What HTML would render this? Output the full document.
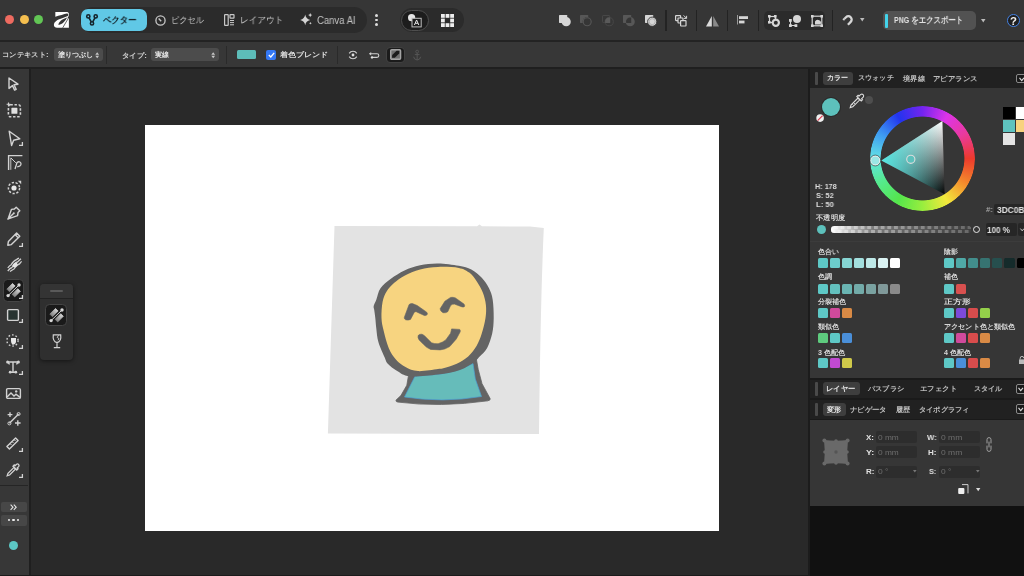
<!DOCTYPE html>
<html><head><meta charset="utf-8">
<style>
*{box-sizing:border-box}
html,body{margin:0;padding:0}
body{width:1024px;height:576px;overflow:hidden;position:relative;background:#292929;font-family:"Liberation Sans",sans-serif;color:#ddd}
.a{position:absolute}
.t{position:absolute;white-space:nowrap;line-height:1;transform-origin:0 0;-webkit-font-smoothing:antialiased;will-change:transform}
svg{position:absolute;overflow:visible}
</style></head><body>
<div class="a" style="left:0px;top:0px;width:1024px;height:40px;background:#363636;border-radius:0px;"></div>
<div class="a" style="left:0px;top:40px;width:1024px;height:1.6px;background:#232323;border-radius:0px;"></div>
<div class="a" style="left:0px;top:41.6px;width:1024px;height:0.8px;background:#3b3b3b;border-radius:0px;"></div>
<div class="a" style="left:0px;top:42px;width:1024px;height:25px;background:#373737;border-radius:0px;"></div>
<div class="a" style="left:0px;top:67px;width:1024px;height:2px;background:#1f1f1f;border-radius:0px;"></div>
<div class="a" style="left:0px;top:69px;width:29.2px;height:507px;background:#373737;border-radius:0px;"></div>
<div class="a" style="left:29.2px;top:69px;width:1.8px;height:507px;background:#1f1f1f;border-radius:0px;"></div>
<div class="a" style="left:0px;top:574.6px;width:1024px;height:1.4px;background:#1b1b1b;border-radius:0px;"></div>
<div class="a" style="left:144.5px;top:125px;width:574px;height:406px;background:#ffffff;border-radius:0px;"></div>
<div class="a" style="left:5.2px;top:14.9px;width:9.2px;height:9.2px;background:#ee6b60;border-radius:5px;"></div>
<div class="a" style="left:19.6px;top:14.9px;width:9.2px;height:9.2px;background:#f5bf4f;border-radius:5px;"></div>
<div class="a" style="left:33.8px;top:14.9px;width:9.2px;height:9.2px;background:#62c655;border-radius:5px;"></div>
<svg style="left:50px;top:8px" width="24" height="24" viewBox="0 0 576 576"><path d="M128 98 L398 94 C458 94 466 150 442 205 L425 240 L453 240 L453 472 L195 474 C112 474 86 432 96 382 C104 335 140 300 185 280 L128 280 Z" fill="#ffffff"/><path d="M110 214 L110 345 Q150 298 205 278 Q300 240 428 192 L440 160 Q432 128 405 132 Q300 158 110 214Z" fill="#363636"/><path d="M205 405 C190 350 290 262 410 228 C372 305 300 392 205 405 Z" fill="#363636"/><path d="M305 476 L445 238" stroke="#363636" stroke-width="18"/><path d="M470 222 L425 236" stroke="#363636" stroke-width="22"/></svg>
<div class="a" style="left:80px;top:6.5px;width:287px;height:26px;background:#2b2b2b;border-radius:13px;"></div>
<div class="a" style="left:80.8px;top:8.8px;width:65.8px;height:22.4px;background:#60c8e6;border-radius:7px;"></div>
<svg style="left:86px;top:14px" width="12" height="12" viewBox="0 0 12 12"><g fill="none" stroke="#15242c" stroke-width="1.6"><path d="M3 3.8 L5.3 7.9 M9 3.8 L6.7 7.9"/><circle cx="2.3" cy="2.4" r="1.6"/><circle cx="9.7" cy="2.4" r="1.6"/><circle cx="6" cy="9.4" r="1.6"/></g></svg>
<svg style="left:155px;top:14.5px" width="11" height="11" viewBox="0 0 11 11"><circle cx="5.5" cy="5.5" r="4.6" fill="none" stroke="#c8c8c8" stroke-width="1.3"/><path d="M3.6 3.6 L6.2 6.2" stroke="#c8c8c8" stroke-width="1.4"/></svg>
<svg style="left:224px;top:14px" width="11" height="12" viewBox="0 0 11 12"><g fill="none" stroke="#c8c8c8" stroke-width="1.2"><rect x="0.6" y="0.6" width="3.6" height="10.8" rx="0.5"/><rect x="6" y="0.6" width="4" height="3.6" rx="0.5"/></g><path d="M6 6.5 H10 M6 8.6 H10 M6 10.8 H10" stroke="#c8c8c8" stroke-width="1"/></svg>
<svg style="left:299.5px;top:13px" width="13" height="13" viewBox="0 0 13 13"><path d="M5.2 1.6 Q5.9 6 10.2 6.9 Q5.9 7.8 5.2 12.2 Q4.5 7.8 0.2 6.9 Q4.5 6 5.2 1.6Z" fill="#d4d4d4"/><path d="M10.2 0 Q10.5 1.8 12.3 2.1 Q10.5 2.4 10.2 4.2 Q9.9 2.4 8.1 2.1 Q9.9 1.8 10.2 0Z" fill="#d4d4d4"/><path d="M10.4 9 Q10.6 10.1 11.7 10.3 Q10.6 10.5 10.4 11.6 Q10.2 10.5 9.1 10.3 Q10.2 10.1 10.4 9Z" fill="#d4d4d4"/></svg>
<div class="a" style="left:375.2px;top:14.2px;width:2.8px;height:2.8px;background:#dddddd;border-radius:2px;"></div>
<div class="a" style="left:375.2px;top:18.5px;width:2.8px;height:2.8px;background:#dddddd;border-radius:2px;"></div>
<div class="a" style="left:375.2px;top:23.1px;width:2.8px;height:2.8px;background:#dddddd;border-radius:2px;"></div>
<div class="a" style="left:399.7px;top:7.5px;width:64px;height:24.7px;background:#2b2b2b;border-radius:12.3px;"></div>
<div class="a" style="left:400.8px;top:9.7px;width:27.9px;height:21.4px;background:#1d1d1d;border-radius:10.7px;border:1px solid #4e4e4e"></div>
<svg style="left:407px;top:13px" width="16" height="15" viewBox="0 0 16 15"><circle cx="4.6" cy="4.7" r="3.6" fill="#e6e6e6"/><rect x="5" y="5.3" width="9.2" height="8.6" fill="#1d1d1d" stroke="#bdbdbd" stroke-width="1"/><path d="M7.4 12 L9.6 7 L11.8 12 M8.3 10.3 H10.9" fill="none" stroke="#e6e6e6" stroke-width="1"/></svg>
<svg style="left:440.5px;top:14px" width="13" height="13" viewBox="0 0 13 13"><g fill="#eeeeee"><rect x="0.0" y="0.0" width="3.8" height="3.8"/><rect x="4.6" y="0.0" width="3.8" height="3.8"/><rect x="9.2" y="0.0" width="3.8" height="3.8"/><rect x="0.0" y="4.6" width="3.8" height="3.8"/><rect x="9.2" y="4.6" width="3.8" height="3.8"/><rect x="0.0" y="9.2" width="3.8" height="3.8"/><rect x="4.6" y="9.2" width="3.8" height="3.8"/><rect x="9.2" y="9.2" width="3.8" height="3.8"/></g></svg>
<svg style="left:558.8px;top:14.9px" width="12.5" height="12" viewBox="0 0 12.5 12"><rect x="0" y="0" width="8.2" height="7.9" rx="0.6" fill="#d6d6d6"/><circle cx="7.2" cy="6.7" r="4.6" fill="#d6d6d6"/></svg>
<svg style="left:580.4px;top:14.9px" width="12.5" height="12" viewBox="0 0 12.5 12"><rect x="0" y="0" width="8.2" height="7.9" rx="0.6" fill="#575757"/><circle cx="7.2" cy="6.7" r="4.6" fill="#363636"/><circle cx="7.2" cy="6.7" r="4" fill="none" stroke="#575757" stroke-width="1.1"/></svg>
<svg style="left:601.8px;top:14.9px" width="12.5" height="12" viewBox="0 0 12.5 12"><rect x="0.5" y="0.5" width="7.2" height="6.9" rx="0.6" fill="none" stroke="#474747" stroke-width="1"/><circle cx="7.2" cy="6.7" r="4.1" fill="none" stroke="#474747" stroke-width="1"/><path d="M3.2 7.9 A4.1 4.1 0 0 1 7.7 2.6 L8.2 2.6 L8.2 7.9Z" fill="#5a5a5a"/></svg>
<svg style="left:623.2px;top:14.9px" width="12.5" height="12" viewBox="0 0 12.5 12"><rect x="0" y="0" width="8.2" height="7.9" rx="0.6" fill="#575757"/><circle cx="7.2" cy="6.7" r="4.6" fill="#575757"/><path d="M3.2 7.9 A4.1 4.1 0 0 1 7.7 2.6 L8.2 2.6 L8.2 7.9Z" fill="#363636"/></svg>
<svg style="left:644.9px;top:14.9px" width="12.5" height="12" viewBox="0 0 12.5 12"><rect x="0" y="0" width="8.2" height="7.9" rx="0.6" fill="#d6d6d6"/><circle cx="7.2" cy="6.7" r="4.6" fill="#d6d6d6" stroke="#363636" stroke-width="0.9"/><circle cx="7.2" cy="6.7" r="3" fill="none" stroke="#9a9a9a" stroke-width="0.6"/></svg>
<div class="a" style="left:665.4px;top:10.3px;width:1.2px;height:20.5px;background:#232323;border-radius:0px;"></div>
<div class="a" style="left:695.8px;top:10.3px;width:1.2px;height:20.5px;background:#232323;border-radius:0px;"></div>
<div class="a" style="left:726.9px;top:10.3px;width:1.2px;height:20.5px;background:#232323;border-radius:0px;"></div>
<div class="a" style="left:758.0px;top:10.3px;width:1.2px;height:20.5px;background:#232323;border-radius:0px;"></div>
<div class="a" style="left:832.0px;top:10.3px;width:1.2px;height:20.5px;background:#232323;border-radius:0px;"></div>
<svg style="left:675.2px;top:15px" width="12.5" height="12" viewBox="0 0 12.5 12"><g fill="#363636" stroke="#d6d6d6" stroke-width="1.2"><rect x="0.6" y="0.6" width="5" height="5" rx="0.5"/><rect x="3" y="3" width="5" height="5" rx="0.5"/><rect x="5.6" y="5.6" width="5.4" height="5.4" rx="0.5"/></g><path d="M8.6 0.4 L11.4 3.2 M11.6 0.8 V3.4 H9" stroke="#d6d6d6" stroke-width="1" fill="none"/></svg>
<svg style="left:705.7px;top:16.1px" width="13" height="10.6" viewBox="0 0 13 10.6"><path d="M5.8 0 L5.8 10.6 L0 10.6Z" fill="#dcdcdc"/><path d="M7.2 0 L7.2 10.6 L13 10.6Z" fill="#8a8a8a"/></svg>
<svg style="left:737.4px;top:15px" width="11" height="9.5" viewBox="0 0 11 9.5"><rect x="0" y="0" width="1" height="9.5" fill="#9a9a9a"/><rect x="2" y="1.2" width="9" height="2.8" fill="#d6d6d6"/><rect x="2" y="5.6" width="5.5" height="2.8" fill="#d6d6d6"/></svg>
<div class="a" style="left:764.3px;top:10.9px;width:61.2px;height:19.3px;background:#2b2b2b;border-radius:5px;"></div>
<svg style="left:767.5px;top:14.7px" width="12" height="12" viewBox="0 0 12 12"><rect x="1.5" y="1.5" width="6" height="6" fill="none" stroke="#d6d6d6" stroke-width="1.2"/><g fill="#d6d6d6"><rect x="0" y="0" width="2.6" height="2.6"/><rect x="6" y="0" width="2.6" height="2.6"/><rect x="0" y="6" width="2.6" height="2.6"/></g><circle cx="7.8" cy="7.8" r="4.2" fill="#d6d6d6"/><circle cx="7.8" cy="7.8" r="2" fill="#2b2b2b"/></svg>
<svg style="left:789px;top:14.7px" width="12" height="12" viewBox="0 0 12 12"><circle cx="8" cy="4" r="4" fill="#d6d6d6"/><path d="M1.5 5 V10.5 H7" fill="none" stroke="#d6d6d6" stroke-width="1.1"/><g fill="#d6d6d6"><rect x="0" y="4" width="2.8" height="2.8"/><rect x="0" y="9.2" width="2.8" height="2.8"/><rect x="5.5" y="9.2" width="2.8" height="2.8"/></g></svg>
<svg style="left:810.5px;top:14.7px" width="12" height="12" viewBox="0 0 12 12"><rect x="1.2" y="1.2" width="9.6" height="9.6" fill="none" stroke="#d6d6d6" stroke-width="1.2"/><g fill="#d6d6d6"><rect x="0" y="0" width="2.6" height="2.6"/><rect x="9.4" y="0" width="2.6" height="2.6"/><rect x="0" y="9.4" width="2.6" height="2.6"/><rect x="9.4" y="9.4" width="2.6" height="2.6"/></g><path d="M4 9.5 V6.5 A3 3 0 0 1 9.5 9.5Z" fill="#d6d6d6"/></svg>
<svg style="left:842.2px;top:15.2px" width="10.5" height="10.5" viewBox="0 0 10.5 10.5"><path d="M1.2 5 L4 2.2 A3.3 3.3 0 0 1 8.7 6.9 L5.9 9.7" fill="none" stroke="#d6d6d6" stroke-width="2.3"/><path d="M2.4 3.8 L3.2 4.6 M5.1 6.5 L5.9 7.3" stroke="#363636" stroke-width="0.7"/></svg>
<svg style="left:860px;top:18.4px" width="4.5" height="4" viewBox="0 0 4.5 4"><path d="M0 0 H4.5 L2.25 3.6Z" fill="#bbbbbb"/></svg>
<div class="a" style="left:882.5px;top:10.7px;width:93px;height:19.8px;background:#525252;border-radius:5px;"></div>
<div class="a" style="left:885.2px;top:13.9px;width:3.3px;height:13.7px;background:#43d3ea;border-radius:1px;"></div>
<svg style="left:980.5px;top:18.6px" width="4.5" height="4" viewBox="0 0 4.5 4"><path d="M0 0 H4.5 L2.25 3.6Z" fill="#bbbbbb"/></svg>
<div class="a" style="left:1006.9px;top:14.3px;width:12.8px;height:12.8px;background:#1f1f1f;border-radius:6.4px;border:1.5px solid #4483e6"></div>
<div class="a" style="left:53.7px;top:47.8px;width:48.9px;height:13.4px;background:#4c4c4c;border-radius:3px;"></div>
<svg style="left:95px;top:51.8px" width="4.4" height="6.4" viewBox="0 0 4.4 6.4"><path d="M0.3 2.7 L2.2 0.2 L4.1 2.7Z M0.3 3.7 L2.2 6.2 L4.1 3.7Z" fill="#c8c8c8"/></svg>
<div class="a" style="left:105.6px;top:46px;width:1px;height:18px;background:#2a2a2a;border-radius:0px;"></div>
<div class="a" style="left:151px;top:47.8px;width:68px;height:13.4px;background:#4c4c4c;border-radius:3px;"></div>
<svg style="left:210.5px;top:51.8px" width="4.4" height="6.4" viewBox="0 0 4.4 6.4"><path d="M0.3 2.7 L2.2 0.2 L4.1 2.7Z M0.3 3.7 L2.2 6.2 L4.1 3.7Z" fill="#c8c8c8"/></svg>
<div class="a" style="left:226.2px;top:46px;width:1px;height:18px;background:#2a2a2a;border-radius:0px;"></div>
<div class="a" style="left:237.2px;top:49.7px;width:18.8px;height:9.6px;background:#5dbdb9;border-radius:1.5px;"></div>
<div class="a" style="left:266px;top:50px;width:10.2px;height:10px;background:#3478f6;border-radius:2px;"></div>
<svg style="left:267.5px;top:52px" width="7" height="6" viewBox="0 0 7 6"><path d="M0.8 3 L2.8 5 L6.2 0.8" fill="none" stroke="#fff" stroke-width="1.3"/></svg>
<div class="a" style="left:336.8px;top:46px;width:1px;height:18px;background:#2a2a2a;border-radius:0px;"></div>
<svg style="left:347.5px;top:49.7px" width="10" height="10" viewBox="0 0 10 10"><path d="M1.2 3.4 A4.4 4.4 0 0 1 8.8 3.4 M8.8 6.6 A4.4 4.4 0 0 1 1.2 6.6" fill="none" stroke="#cfcfcf" stroke-width="1.1"/><circle cx="5" cy="5" r="1.4" fill="#e0e0e0"/></svg>
<svg style="left:369.4px;top:51.5px" width="10" height="6.6" viewBox="0 0 10 6.6"><path d="M0.6 1.8 H8 A1.8 1.8 0 0 1 8 5.4 H3.2" fill="none" stroke="#cfcfcf" stroke-width="1.1"/><path d="M0 1.8 L2.2 0 V3.6Z" fill="#cfcfcf"/><circle cx="3" cy="5.4" r="1.2" fill="#e0e0e0"/></svg>
<div class="a" style="left:387.3px;top:48px;width:16.5px;height:13.8px;background:#1b1b1b;border-radius:3.5px;box-shadow:0 0 0 0.8px #454545"></div>
<svg style="left:389.9px;top:49.3px" width="11.3" height="10.9" viewBox="0 0 11.3 10.9"><rect x="0.7" y="0.7" width="9.9" height="9.5" rx="1" fill="#707070" stroke="#a4a4a4" stroke-width="1.4"/><path d="M2 8.8 L2.2 6 L6.6 1.8 L9.4 1.8 L9.2 4.6 L4.8 8.8Z" fill="#1b1b1b"/></svg>
<svg style="left:413px;top:49.7px" width="8.3" height="10.6" viewBox="0 0 8.3 10.6"><circle cx="4.15" cy="1.6" r="1.4" fill="none" stroke="#555" stroke-width="0.9"/><path d="M4.15 3 V10 M1.8 4.6 H6.5 M0.6 6.8 Q1 9.6 4.15 10 Q7.3 9.6 7.7 6.8" fill="none" stroke="#555" stroke-width="1"/></svg>
<svg style="left:8.3px;top:77.4px" width="11" height="14" viewBox="0 0 11 14"><path d="M1 1 L10 7.2 L6 7.8 L8.2 12.4 L6.6 13.1 L4.5 8.6 L1 11.4Z" fill="none" stroke="#d2d2d2" stroke-width="1.4" stroke-linejoin="round"/></svg>
<svg style="left:6.5px;top:103px" width="15" height="15.5" viewBox="0 0 15 15.5"><rect x="1.4" y="1.8" width="12" height="12" rx="2" fill="none" stroke="#d2d2d2" stroke-width="1.6" stroke-dasharray="2.4 1.7"/><rect x="4.4" y="4.8" width="6" height="6" rx="0.6" fill="#e0e0e0"/><path d="M1.5 -0.6 V3.2 M-0.4 1.3 H3.4" stroke="#d2d2d2" stroke-width="1.1"/></svg>
<svg style="left:7.5px;top:129.5px" width="15" height="17" viewBox="0 0 15 17"><path d="M1.2 1.2 L11.8 8.8 L5.6 10.2 L3.6 15.6Z" fill="none" stroke="#d2d2d2" stroke-width="1.4" stroke-linejoin="round"/></svg>
<svg style="left:18.5px;top:141.89999999999998px" width="4" height="4" viewBox="0 0 4 4"><path d="M3.4 0 V3.4 H0" fill="none" stroke="#d2d2d2" stroke-width="1.3"/></svg>
<svg style="left:7.6px;top:154.5px" width="15" height="15.5" viewBox="0 0 15 15.5"><path d="M0.6 15 V0.6 H14.4" fill="none" stroke="#d2d2d2" stroke-width="1.4"/><path d="M3 3 L7.8 7.8" stroke="#d2d2d2" stroke-width="1"/><path d="M2.8 2.8 V14.8" stroke="#d2d2d2" stroke-width="0.9"/><path d="M7 14 L8.6 9 A2.2 2.2 0 1 1 12 10.8 L9.2 12" fill="none" stroke="#d2d2d2" stroke-width="1.3"/></svg>
<svg style="left:6.5px;top:180px" width="15" height="15" viewBox="0 0 15 15"><circle cx="7" cy="8" r="5.6" fill="none" stroke="#d2d2d2" stroke-width="1.5" stroke-dasharray="2.3 1.6"/><circle cx="7" cy="8" r="2.6" fill="#e8e8e8"/><path d="M10.8 0.8 L14.2 0.8 L14.2 4.2Z" fill="#d2d2d2"/></svg>
<svg style="left:7px;top:206px" width="14" height="14" viewBox="0 0 14 14"><path d="M9.2 1.2 L12.8 4.8 L11 6.6 L10.6 9.6 L2 12.6 L0.9 13.1 L1.4 12 L4.4 3.4 L7.4 3Z M1.4 12.6 L6.3 7.7" fill="none" stroke="#d2d2d2" stroke-width="1.4" stroke-linejoin="round"/><circle cx="6.8" cy="7.2" r="1" fill="#d2d2d2"/></svg>
<svg style="left:6.8px;top:231.5px" width="14" height="14" viewBox="0 0 14 14"><path d="M9.6 1 L12.8 4.2 L4.4 12.6 L0.8 13.2 L1.4 9.4Z M8 2.6 L11.2 5.8" fill="none" stroke="#d2d2d2" stroke-width="1.4" stroke-linejoin="round"/></svg>
<svg style="left:18.5px;top:242.7px" width="4" height="4" viewBox="0 0 4 4"><path d="M3.4 0 V3.4 H0" fill="none" stroke="#d2d2d2" stroke-width="1.3"/></svg>
<svg style="left:6.5px;top:257.5px" width="15" height="14" viewBox="0 0 15 14"><path d="M0.8 13 Q3 10 5 9.5 Q8 4.5 10.5 4 Q12.5 2 14 0.8" fill="none" stroke="#d2d2d2" stroke-width="1.3"/><path d="M0.8 10 Q2.5 7.5 4 7 Q6.5 2.5 9.5 1.6 Q11 0.6 12 0.2" fill="none" stroke="#d2d2d2" stroke-width="1.3"/><path d="M3 13.6 Q5.5 11.6 7 11 Q10 6.5 12.4 6 Q13.5 4.6 14.6 3.4" fill="none" stroke="#d2d2d2" stroke-width="1.3"/><ellipse cx="8" cy="7" rx="2.8" ry="2" transform="rotate(-40 8 7)" fill="#e6e6e6"/></svg>
<div class="a" style="left:2.6px;top:278.7px;width:21.7px;height:23.3px;background:#1a1a1a;border-radius:4.5px;border:1px solid #454545"></div>
<svg style="left:3.7px;top:280.6px" width="18" height="18" viewBox="0 0 18 18"><defs><linearGradient id="gb" x1="0" y1="1" x2="1" y2="0"><stop offset="0" stop-color="#6e6e6e"/><stop offset="1" stop-color="#e6e6e6"/></linearGradient></defs><path d="M2.85 8.1 L8.5 2.45 L11.1 5.05 L5.45 10.7Z" fill="url(#gb)" stroke="url(#gb)" stroke-width="0.8" stroke-linejoin="round"/><path d="M8.05 13.3 L13.7 7.65 L16.3 10.25 L10.7 15.9Z" fill="url(#gb)" stroke="url(#gb)" stroke-width="0.8" stroke-linejoin="round"/><path d="M4.1 14.6 L15 4" stroke="#1c1c1c" stroke-width="2.4"/><path d="M4.1 14.6 L15 4" stroke="#d8d8d8" stroke-width="1"/><circle cx="4.1" cy="14.6" r="1.7" fill="#d8d8d8"/><circle cx="15" cy="4" r="1.7" fill="#d8d8d8"/></svg>
<svg style="left:18.9px;top:295.2px" width="4" height="4" viewBox="0 0 4 4"><path d="M3.4 0 V3.4 H0" fill="none" stroke="#d2d2d2" stroke-width="1.3"/></svg>
<svg style="left:7px;top:309px" width="12" height="12" viewBox="0 0 12 12"><rect x="0.6" y="0.6" width="10.8" height="10.8" rx="1" fill="#283431" stroke="#d2d2d2" stroke-width="1.4"/></svg>
<svg style="left:18.5px;top:319.2px" width="4" height="4" viewBox="0 0 4 4"><path d="M3.4 0 V3.4 H0" fill="none" stroke="#d2d2d2" stroke-width="1.3"/></svg>
<svg style="left:6px;top:334px" width="14" height="13" viewBox="0 0 14 13"><circle cx="6.5" cy="6.5" r="5.6" fill="none" stroke="#d2d2d2" stroke-width="1.4" stroke-dasharray="1.6 2"/><path d="M5 4 H10 V7.5 Q10 10.5 6.5 10.8 Q5 9 5 7Z" fill="#e8e8e8"/></svg>
<svg style="left:18.5px;top:345.2px" width="4" height="4" viewBox="0 0 4 4"><path d="M3.4 0 V3.4 H0" fill="none" stroke="#d2d2d2" stroke-width="1.3"/></svg>
<svg style="left:6px;top:360px" width="14" height="14" viewBox="0 0 14 14"><path d="M1.6 2 H12.4 M7 2 V12.2 M4.2 12.2 H9.8 M1.6 2 L3.6 4.4 M12.4 2 L10.4 4.4" fill="none" stroke="#d2d2d2" stroke-width="1.4"/><g fill="#d2d2d2"><circle cx="1.6" cy="2" r="1.5"/><circle cx="12.4" cy="2" r="1.5"/><circle cx="4.2" cy="12.2" r="1.4"/><circle cx="9.8" cy="12.2" r="1.4"/></g></svg>
<svg style="left:18.5px;top:370.7px" width="4" height="4" viewBox="0 0 4 4"><path d="M3.4 0 V3.4 H0" fill="none" stroke="#d2d2d2" stroke-width="1.3"/></svg>
<svg style="left:6px;top:387.8px" width="15" height="11" viewBox="0 0 15 11"><rect x="0.6" y="0.6" width="13.8" height="9.8" rx="1.2" fill="none" stroke="#d2d2d2" stroke-width="1.4"/><path d="M1 9 L5 5 L8 8 L10 6.2 L14 9.4" fill="none" stroke="#d2d2d2" stroke-width="1.4"/><circle cx="10.2" cy="3.4" r="1.2" fill="#d2d2d2"/></svg>
<svg style="left:6.5px;top:412px" width="14" height="14" viewBox="0 0 14 14"><path d="M2.4 11.2 L11.6 2" stroke="#d2d2d2" stroke-width="1.4"/><circle cx="2.4" cy="11.4" r="1.5" fill="none" stroke="#d2d2d2" stroke-width="1"/><circle cx="11.6" cy="2" r="1.5" fill="none" stroke="#d2d2d2" stroke-width="1"/><path d="M0.6 2.6 H5.4 M3 0.2 V5 M8 11 H13.6 M10.8 8.2 V13.8" stroke="#d2d2d2" stroke-width="1.4"/></svg>
<svg style="left:6px;top:437px" width="13" height="13" viewBox="0 0 13 13"><path d="M0.9 9.6 L9.6 0.9 L12.1 3.4 L3.4 12.1Z" fill="none" stroke="#d2d2d2" stroke-width="1.4" stroke-linejoin="round"/><path d="M4 6.5 L5.5 8 M6 4.5 L7.5 6 M8 2.5 L9.5 4" stroke="#d2d2d2" stroke-width="1"/></svg>
<svg style="left:18.5px;top:448.2px" width="4" height="4" viewBox="0 0 4 4"><path d="M3.4 0 V3.4 H0" fill="none" stroke="#d2d2d2" stroke-width="1.3"/></svg>
<svg style="left:6.2px;top:462.5px" width="14" height="14" viewBox="0 0 14 14"><path d="M9 2.8 L10.6 1.2 A1.6 1.6 0 0 1 12.8 3.4 L11.2 5 L12 5.8 L10.8 7 L7 3.2 L8.2 2Z" fill="none" stroke="#d2d2d2" stroke-width="1.3"/><path d="M8 4.4 L2 10.4 L1.2 12.8 L3.6 12 L9.6 6Z" fill="none" stroke="#d2d2d2" stroke-width="1.3"/></svg>
<svg style="left:18.5px;top:473.7px" width="4" height="4" viewBox="0 0 4 4"><path d="M3.4 0 V3.4 H0" fill="none" stroke="#d2d2d2" stroke-width="1.3"/></svg>
<div class="a" style="left:0px;top:484.6px;width:28px;height:1.2px;background:#252525;border-radius:0px;"></div>
<div class="a" style="left:0.5px;top:501.7px;width:26px;height:10.8px;background:#474747;border-radius:2px;"></div>
<svg style="left:10px;top:503.8px" width="7" height="6.5" viewBox="0 0 7 6.5"><path d="M0.6 0.6 L3 3.2 L0.6 5.8 M3.8 0.6 L6.2 3.2 L3.8 5.8" fill="none" stroke="#e6e6e6" stroke-width="1.1"/></svg>
<div class="a" style="left:0.5px;top:514.7px;width:26px;height:11px;background:#474747;border-radius:2px;"></div>
<div class="a" style="left:7.500000000000001px;top:518.9px;width:2.6px;height:2.6px;background:#eeeeee;border-radius:2px;"></div>
<div class="a" style="left:12.0px;top:518.9px;width:2.6px;height:2.6px;background:#eeeeee;border-radius:2px;"></div>
<div class="a" style="left:16.5px;top:518.9px;width:2.6px;height:2.6px;background:#eeeeee;border-radius:2px;"></div>
<div class="a" style="left:8.9px;top:541.4px;width:8.8px;height:8.8px;background:#5cc7c4;border-radius:5px;"></div>
<div class="a" style="left:40px;top:284px;width:33px;height:76px;background:#2f2f2f;border-radius:4px;box-shadow:0 1px 4px rgba(0,0,0,.5)"></div>
<div class="a" style="left:40px;top:284px;width:33px;height:14.2px;background:#343434;border-radius:4px;border-bottom-left-radius:0;border-bottom-right-radius:0"></div>
<div class="a" style="left:40px;top:298.2px;width:33px;height:1px;background:#222222;border-radius:0px;"></div>
<div class="a" style="left:50px;top:290.3px;width:12.5px;height:1.6px;background:#5a5a5a;border-radius:1px;"></div>
<div class="a" style="left:45.2px;top:304px;width:21.8px;height:22.4px;background:#1a1a1a;border-radius:4.5px;border:1px solid #454545"></div>
<svg style="left:46.8px;top:306.2px" width="18" height="18" viewBox="0 0 18 18"><path d="M2.85 8.1 L8.5 2.45 L11.1 5.05 L5.45 10.7Z" fill="url(#gb)" stroke="url(#gb)" stroke-width="0.8" stroke-linejoin="round"/><path d="M8.05 13.3 L13.7 7.65 L16.3 10.25 L10.7 15.9Z" fill="url(#gb)" stroke="url(#gb)" stroke-width="0.8" stroke-linejoin="round"/><path d="M4.1 14.6 L15 4" stroke="#1c1c1c" stroke-width="2.4"/><path d="M4.1 14.6 L15 4" stroke="#d8d8d8" stroke-width="1"/><circle cx="4.1" cy="14.6" r="1.7" fill="#d8d8d8"/><circle cx="15" cy="4" r="1.7" fill="#d8d8d8"/></svg>
<svg style="left:52px;top:334px" width="10" height="14.5" viewBox="0 0 10 14.5"><path d="M1.3 0.8 H8.7 Q9.6 7.4 5 8.6 Q0.4 7.4 1.3 0.8Z M5 8.6 V13.4 M1.8 13.6 H8.2" fill="none" stroke="#d2d2d2" stroke-width="1.2"/><path d="M6.6 1.2 L5.2 3.4 L7 4.6 L6 6.2" fill="none" stroke="#d2d2d2" stroke-width="0.9"/></svg>
<svg style="left:300px;top:200px" width="260" height="250" viewBox="300 200 260 250"><path d="M334.5 226 L477 226.2 L479.5 224.6 L482 226.3 L530 226.5 L543.8 228 Q540.5 300 539 434 L327.9 433.5Z" fill="#e3e3e3"/>
<path d="M408 374 L408.4 376 L406.8 385.3 L400.9 395.5 L395.9 400.2 Q396 402 397.8 402.1 Q440 407.5 487.75 400.85 Q491 400 490.1 398.5 L482 383.65 L478.2 369.3 L476.3 358.8 Z" fill="#646464" stroke="#646464" stroke-width="0.8" stroke-linejoin="round"/>
<path d="M415 376.3 L404.5 397 Q443 403 481.5 396.5 L475.3 378.9 L473 363.6 Q458 371.5 440 374.1Z" fill="#66bcba" stroke="#4c9fd6" stroke-width="0.7"/>
<path d="M438.00 263.50 C444.45 263.58 453.25 264.80 458.80 265.80 C464.35 266.80 467.48 267.50 471.30 269.50 C475.12 271.50 478.80 274.68 481.75 277.80 C484.70 280.92 487.18 284.55 489.00 288.20 C490.82 291.85 491.92 294.73 492.70 299.70 C493.48 304.67 493.78 312.35 493.70 318.00 C493.62 323.65 493.32 328.57 492.20 333.60 C491.08 338.63 489.08 344.38 487.00 348.20 C484.92 352.02 481.87 354.20 479.70 356.50 C477.53 358.80 477.28 359.75 474.00 362.00 C470.72 364.25 466.00 367.92 460.00 370.00 C454.00 372.08 446.38 373.45 438.00 374.50 C429.62 375.55 416.50 376.87 409.70 376.30 C402.90 375.73 400.85 373.18 397.20 371.10 C393.55 369.02 389.88 366.05 387.80 363.80 C385.72 361.55 386.27 361.23 384.70 357.60 C383.13 353.97 379.80 346.87 378.40 342.00 C377.00 337.13 376.82 332.40 376.30 328.40 C375.78 324.40 375.64 321.07 375.30 318.00 C374.96 314.93 374.52 312.02 374.25 310.00 C373.98 307.98 373.36 307.62 373.70 305.90 C374.04 304.18 375.17 302.65 376.30 299.70 C377.43 296.75 378.07 291.68 380.50 288.20 C382.93 284.72 386.90 281.75 390.90 278.80 C394.90 275.85 399.63 272.75 404.50 270.50 C409.37 268.25 414.52 266.47 420.10 265.30 C425.68 264.13 431.55 263.42 438.00 263.50Z" fill="#646464"/>
<path d="M438.00 266.90 C444.45 266.63 453.59 266.95 458.80 267.90 C464.01 268.85 466.30 270.43 469.25 272.60 C472.20 274.77 474.24 277.60 476.50 280.90 C478.76 284.20 481.23 288.40 482.80 292.40 C484.37 296.40 485.45 300.63 485.90 304.90 C486.35 309.17 486.19 313.22 485.50 318.00 C484.81 322.78 483.25 328.92 481.75 333.60 C480.25 338.28 478.76 342.28 476.50 346.10 C474.24 349.92 471.49 353.55 468.20 356.50 C464.91 359.45 460.74 361.88 456.75 363.80 C452.76 365.72 447.38 367.13 444.25 368.00 C441.12 368.87 442.38 368.48 438.00 369.00 C433.62 369.52 423.42 371.43 418.00 371.10 C412.58 370.77 409.15 368.90 405.50 367.00 C401.85 365.10 398.88 362.83 396.10 359.70 C393.32 356.57 390.88 353.07 388.80 348.20 C386.72 343.33 384.82 335.53 383.60 330.50 C382.38 325.47 381.67 322.79 381.50 318.00 C381.33 313.21 381.73 306.20 382.60 301.75 C383.48 297.30 384.85 294.43 386.75 291.30 C388.65 288.18 391.04 285.60 394.00 283.00 C396.96 280.40 400.15 277.95 404.50 275.70 C408.85 273.45 414.52 270.97 420.10 269.50 C425.68 268.03 431.55 267.17 438.00 266.90Z" fill="#f7d480"/>
<g fill="#646464" stroke="#646464" stroke-width="0.6" stroke-linejoin="round"><path d="M404.3 317.4 L409.1 304.55 Q410.5 303.4 412.4 303.6 L417.2 305.5 L426.7 312.2 Q427.8 313.4 427.2 314.6 Q426 315.9 424.35 315.5 L416.2 311.7 Q415 311.5 414.3 312.2 L410.5 319.4 Q408 320.6 405.7 319.8 Q403.9 318.8 404.3 317.4Z"/><path d="M440.1 308.85 L444.9 301.2 L450.6 297.4 Q453 297 455.4 297.9 L464 304.1 Q465 305.4 464.5 306.5 Q463.4 307.3 462.1 306.9 L454.4 304.1 Q452.2 304 450.6 305.5 L447.75 311.7 Q445.5 313.2 443 312.7 Q440.3 311.3 440.1 308.85Z"/><path d="M418.1 335.6 Q419.5 333.8 422 334.2 Q423.4 334.8 424.8 336.1 L431.5 342.75 Q434.5 344 438.2 343.7 Q442.5 342.5 445.8 339.9 L450.6 333.2 L451.6 328.9 L459.7 329.4 Q460.6 330.4 460.2 331.8 L456.35 338.9 L449.7 346.6 Q445 349.6 440.1 349.9 L430.6 349.4 Q426.5 347.8 423.9 344.7 L419.1 339.9 Q417.6 337.6 418.1 335.6Z"/></g></svg>
<div class="a" style="left:808px;top:69px;width:216px;height:507px;background:#111111;border-radius:0px;"></div>
<div class="a" style="left:808px;top:69px;width:2px;height:507px;background:#1c1c1c;border-radius:0px;"></div>
<div class="a" style="left:810px;top:69px;width:214px;height:19px;background:#212121;border-radius:0px;"></div>
<div class="a" style="left:815.2px;top:71.8px;width:2.6px;height:13.6px;background:#4a4a4a;border-radius:1px;"></div>
<div class="a" style="left:822.7px;top:71.7px;width:30.3px;height:13.5px;background:#3e3e3e;border-radius:3px;"></div>
<div class="a" style="left:1016.2px;top:74px;width:12px;height:9.4px;background:#1a1a1a;border-radius:2px;border:1px solid #8a8a8a"></div>
<svg style="left:1018.5px;top:76.5px" width="5.5" height="4.5" viewBox="0 0 5.5 4.5"><path d="M0.5 0.8 L2.75 3.6 L5 0.8" fill="none" stroke="#dddddd" stroke-width="1.1"/></svg>
<div class="a" style="left:810px;top:88px;width:214px;height:289.5px;background:#363636;border-radius:0px;"></div>
<div class="a" style="left:810px;top:241px;width:214px;height:1px;background:#3c3c3c;border-radius:0px;"></div>
<div class="a" style="left:821.7px;top:97.75px;width:18px;height:18px;background:#5dc1bc;border-radius:9px;box-shadow:0 0 0 1px #2a2a2a"></div>
<svg style="left:815.5px;top:113.9px" width="8.2" height="8.2" viewBox="0 0 8.2 8.2"><circle cx="4.1" cy="4.1" r="3.8" fill="#f0f0f0"/><path d="M1.6 6.6 L6.6 1.6" stroke="#e03b4e" stroke-width="1.2"/></svg>
<svg style="left:849px;top:93px" width="15.5" height="15.5" viewBox="0 0 15.5 15.5"><path d="M10 3.2 L11.8 1.4 A1.9 1.9 0 0 1 14.4 4 L12.6 5.8 L13.5 6.7 L12.2 8 L7.8 3.6 L9.1 2.3Z" fill="none" stroke="#dcdcdc" stroke-width="1.1"/><path d="M9 5 L2 12 L1.2 14.6 L3.8 13.8 L10.8 6.8Z" fill="none" stroke="#dcdcdc" stroke-width="1.1"/><path d="M3.2 11 L4.8 12.6 M4.6 9.6 L6.2 11.2" stroke="#dcdcdc" stroke-width="0.8"/></svg>
<div class="a" style="left:865.2px;top:96px;width:8.2px;height:8.2px;background:#4e4e4e;border-radius:5px;"></div>
<div class="a" style="left:870.1px;top:106.3px;width:105px;height:105px;background:conic-gradient(from 90deg, #ee3a2c, #f4892c, #f2e83c, #98ee3e, #55e54c, #55ea8c, #62e2e6, #3e9cf2, #2234ee, #7424f0, #dd34e8, #ea3a9c, #ee3a2c);border-radius:52.5px;-webkit-mask:radial-gradient(circle, transparent 41.5px, #000 42.3px)"></div>
<svg style="left:870px;top:106px" width="106" height="106" viewBox="870 106 106 106"><defs>
<linearGradient id="tw" x1="881.4" y1="160.5" x2="943.5" y2="157.6" gradientUnits="userSpaceOnUse"><stop offset="0" stop-color="#40c0bb" stop-opacity="0"/><stop offset="1" stop-color="#40c0bb" stop-opacity="0"/></linearGradient>
<linearGradient id="tA" gradientUnits="userSpaceOnUse" x1="881.4" y1="160.5" x2="943.5" y2="157.6"><stop offset="0" stop-color="#55e8e4"/><stop offset="1" stop-color="#55e8e4" stop-opacity="0"/></linearGradient>
<linearGradient id="tB" gradientUnits="userSpaceOnUse" x1="942.4" y1="121" x2="944.6" y2="194.3"><stop offset="0" stop-color="#ffffff"/><stop offset="1" stop-color="#000000"/></linearGradient>
</defs>
<path d="M881.4 160.5 L942.4 121 L944.6 194.3Z" fill="url(#tB)"/>
<path d="M881.4 160.5 L942.4 121 L944.6 194.3Z" fill="url(#tA)"/>
<circle cx="875.3" cy="160.5" r="4.6" fill="#9ae6e4" stroke="#f0f0f0" stroke-width="1.1"/>
<circle cx="875.3" cy="160.5" r="5.4" fill="none" stroke="#2a2a2a" stroke-width="0.6"/>
<circle cx="910.8" cy="159.3" r="4.1" fill="#5dc1bc" stroke="#dcdcdc" stroke-width="1.1"/></svg>
<div class="a" style="left:1003.1px;top:107.2px;width:12.4px;height:11.8px;background:#000000;border-radius:0px;"></div>
<div class="a" style="left:1016.1px;top:107.2px;width:12.4px;height:11.8px;background:#ffffff;border-radius:0px;"></div>
<div class="a" style="left:1003.1px;top:120.2px;width:12.4px;height:11.8px;background:#5ec3bf;border-radius:0px;"></div>
<div class="a" style="left:1016.1px;top:120.2px;width:12.4px;height:11.8px;background:#f8d27e;border-radius:0px;"></div>
<div class="a" style="left:1003.1px;top:132.8px;width:12.4px;height:11.8px;background:#e4e4e4;border-radius:0px;"></div>
<div class="a" style="left:994.3px;top:203.8px;width:40px;height:11.7px;background:#262626;border-radius:2px;"></div>
<div class="a" style="left:816.6px;top:224.9px;width:9.6px;height:9.6px;background:#5dc1bc;border-radius:5px;"></div>
<div class="a" style="left:830.5px;top:226px;width:140px;height:6.7px;background:repeating-conic-gradient(#a8a8a8 0 25%, #4e4e4e 0 50%) 0 0/6.7px 6.7px;border-radius:3.3px;"></div>
<div class="a" style="left:830.5px;top:226px;width:140px;height:6.7px;background:linear-gradient(90deg,#ffffff 0%,rgba(255,255,255,0.35) 30%,rgba(255,255,255,0) 100%);border-radius:3.3px;"></div>
<div class="a" style="left:830.5px;top:226px;width:140px;height:6.7px;background:linear-gradient(90deg,rgba(52,52,52,0) 0%,rgba(52,52,52,0.55) 100%);border-radius:3.3px;"></div>
<div class="a" style="left:972.6px;top:226.1px;width:7.2px;height:7.2px;background:transparent;border-radius:4px;border:1.6px solid #e6e6e6"></div>
<div class="a" style="left:985.5px;top:223px;width:31px;height:13px;background:#262626;border-radius:2px;"></div>
<div class="a" style="left:1018.3px;top:223px;width:8px;height:13px;background:#262626;border-radius:2px;"></div>
<svg style="left:1019.5px;top:228px" width="4.5" height="3.5" viewBox="0 0 4.5 3.5"><path d="M0.4 0.6 L2.2 2.8 L4 0.6" fill="none" stroke="#cccccc" stroke-width="1"/></svg>
<div class="a" style="left:817.7px;top:258.3px;width:10.2px;height:10.2px;background:#5ec8c6;border-radius:1.5px;"></div>
<div class="a" style="left:829.8000000000001px;top:258.3px;width:10.2px;height:10.2px;background:#6ccccb;border-radius:1.5px;"></div>
<div class="a" style="left:841.9000000000001px;top:258.3px;width:10.2px;height:10.2px;background:#86d5d3;border-radius:1.5px;"></div>
<div class="a" style="left:854.0px;top:258.3px;width:10.2px;height:10.2px;background:#a2dfde;border-radius:1.5px;"></div>
<div class="a" style="left:866.1px;top:258.3px;width:10.2px;height:10.2px;background:#bee9e8;border-radius:1.5px;"></div>
<div class="a" style="left:878.2px;top:258.3px;width:10.2px;height:10.2px;background:#dbf3f3;border-radius:1.5px;"></div>
<div class="a" style="left:890.3000000000001px;top:258.3px;width:10.2px;height:10.2px;background:#ffffff;border-radius:1.5px;"></div>
<div class="a" style="left:817.7px;top:283.5px;width:10.2px;height:10.2px;background:#5ec8c6;border-radius:1.5px;"></div>
<div class="a" style="left:829.8000000000001px;top:283.5px;width:10.2px;height:10.2px;background:#63c0be;border-radius:1.5px;"></div>
<div class="a" style="left:841.9000000000001px;top:283.5px;width:10.2px;height:10.2px;background:#6ab5b3;border-radius:1.5px;"></div>
<div class="a" style="left:854.0px;top:283.5px;width:10.2px;height:10.2px;background:#72aba9;border-radius:1.5px;"></div>
<div class="a" style="left:866.1px;top:283.5px;width:10.2px;height:10.2px;background:#7aa2a1;border-radius:1.5px;"></div>
<div class="a" style="left:878.2px;top:283.5px;width:10.2px;height:10.2px;background:#80999a;border-radius:1.5px;"></div>
<div class="a" style="left:890.3000000000001px;top:283.5px;width:10.2px;height:10.2px;background:#8a8a8a;border-radius:1.5px;"></div>
<div class="a" style="left:817.7px;top:308.2px;width:10.2px;height:10.2px;background:#5ec8c6;border-radius:1.5px;"></div>
<div class="a" style="left:829.8000000000001px;top:308.2px;width:10.2px;height:10.2px;background:#d04a9c;border-radius:1.5px;"></div>
<div class="a" style="left:841.9000000000001px;top:308.2px;width:10.2px;height:10.2px;background:#d98a45;border-radius:1.5px;"></div>
<div class="a" style="left:817.7px;top:333.2px;width:10.2px;height:10.2px;background:#5ecb7e;border-radius:1.5px;"></div>
<div class="a" style="left:829.8000000000001px;top:333.2px;width:10.2px;height:10.2px;background:#5ec8c6;border-radius:1.5px;"></div>
<div class="a" style="left:841.9000000000001px;top:333.2px;width:10.2px;height:10.2px;background:#4a8fd9;border-radius:1.5px;"></div>
<div class="a" style="left:817.7px;top:358.2px;width:10.2px;height:10.2px;background:#5ec8c6;border-radius:1.5px;"></div>
<div class="a" style="left:829.8000000000001px;top:358.2px;width:10.2px;height:10.2px;background:#c14ad1;border-radius:1.5px;"></div>
<div class="a" style="left:841.9000000000001px;top:358.2px;width:10.2px;height:10.2px;background:#cfc94a;border-radius:1.5px;"></div>
<div class="a" style="left:943.9px;top:258.3px;width:10.2px;height:10.2px;background:#5ec8c6;border-radius:1.5px;"></div>
<div class="a" style="left:956.0px;top:258.3px;width:10.2px;height:10.2px;background:#4fa9a7;border-radius:1.5px;"></div>
<div class="a" style="left:968.1px;top:258.3px;width:10.2px;height:10.2px;background:#428e8c;border-radius:1.5px;"></div>
<div class="a" style="left:980.1999999999999px;top:258.3px;width:10.2px;height:10.2px;background:#367371;border-radius:1.5px;"></div>
<div class="a" style="left:992.3px;top:258.3px;width:10.2px;height:10.2px;background:#264f4e;border-radius:1.5px;"></div>
<div class="a" style="left:1004.4px;top:258.3px;width:10.2px;height:10.2px;background:#152b2b;border-radius:1.5px;"></div>
<div class="a" style="left:1016.5px;top:258.3px;width:10.2px;height:10.2px;background:#000000;border-radius:1.5px;"></div>
<div class="a" style="left:943.9px;top:283.5px;width:10.2px;height:10.2px;background:#5ec8c6;border-radius:1.5px;"></div>
<div class="a" style="left:956.0px;top:283.5px;width:10.2px;height:10.2px;background:#d8504f;border-radius:1.5px;"></div>
<div class="a" style="left:943.9px;top:308.2px;width:10.2px;height:10.2px;background:#5ec8c6;border-radius:1.5px;"></div>
<div class="a" style="left:956.0px;top:308.2px;width:10.2px;height:10.2px;background:#7d4ad9;border-radius:1.5px;"></div>
<div class="a" style="left:968.1px;top:308.2px;width:10.2px;height:10.2px;background:#d84c4c;border-radius:1.5px;"></div>
<div class="a" style="left:980.1999999999999px;top:308.2px;width:10.2px;height:10.2px;background:#94d04a;border-radius:1.5px;"></div>
<div class="a" style="left:943.9px;top:333.2px;width:10.2px;height:10.2px;background:#5ec8c6;border-radius:1.5px;"></div>
<div class="a" style="left:956.0px;top:333.2px;width:10.2px;height:10.2px;background:#d04a9c;border-radius:1.5px;"></div>
<div class="a" style="left:968.1px;top:333.2px;width:10.2px;height:10.2px;background:#d84c4c;border-radius:1.5px;"></div>
<div class="a" style="left:980.1999999999999px;top:333.2px;width:10.2px;height:10.2px;background:#d98a45;border-radius:1.5px;"></div>
<div class="a" style="left:943.9px;top:358.2px;width:10.2px;height:10.2px;background:#5ec8c6;border-radius:1.5px;"></div>
<div class="a" style="left:956.0px;top:358.2px;width:10.2px;height:10.2px;background:#4a8fd9;border-radius:1.5px;"></div>
<div class="a" style="left:968.1px;top:358.2px;width:10.2px;height:10.2px;background:#d84c4c;border-radius:1.5px;"></div>
<div class="a" style="left:980.1999999999999px;top:358.2px;width:10.2px;height:10.2px;background:#d98a45;border-radius:1.5px;"></div>
<svg style="left:1019px;top:356px" width="6" height="8" viewBox="0 0 6 8"><rect x="0" y="3.4" width="6" height="4.6" fill="#bbbbbb"/><path d="M1.2 3.4 V2.2 A1.8 1.8 0 0 1 4.8 2.2" fill="none" stroke="#bbbbbb" stroke-width="1"/></svg>
<div class="a" style="left:810px;top:377.5px;width:214px;height:2px;background:#1a1a1a;border-radius:0px;"></div>
<div class="a" style="left:810px;top:379.5px;width:214px;height:18.5px;background:#212121;border-radius:0px;"></div>
<div class="a" style="left:815.2px;top:382.3px;width:2.6px;height:13.4px;background:#4a4a4a;border-radius:1px;"></div>
<div class="a" style="left:822.8px;top:382.2px;width:37.5px;height:13.1px;background:#3e3e3e;border-radius:3px;"></div>
<div class="a" style="left:1015.8px;top:383.7px;width:12px;height:10.6px;background:#1a1a1a;border-radius:2px;border:1px solid #8a8a8a"></div>
<svg style="left:1018.2px;top:386.8px" width="5.5" height="4.5" viewBox="0 0 5.5 4.5"><path d="M0.5 0.8 L2.75 3.6 L5 0.8" fill="none" stroke="#dddddd" stroke-width="1.1"/></svg>
<div class="a" style="left:810px;top:398px;width:214px;height:1.5px;background:#1a1a1a;border-radius:0px;"></div>
<div class="a" style="left:810px;top:399.5px;width:214px;height:19.5px;background:#212121;border-radius:0px;"></div>
<div class="a" style="left:815.2px;top:402.8px;width:2.6px;height:13.4px;background:#4a4a4a;border-radius:1px;"></div>
<div class="a" style="left:822.8px;top:402.7px;width:23.2px;height:13.3px;background:#3e3e3e;border-radius:3px;"></div>
<div class="a" style="left:1015.8px;top:403.8px;width:12px;height:10.6px;background:#1a1a1a;border-radius:2px;border:1px solid #8a8a8a"></div>
<svg style="left:1018.2px;top:406.9px" width="5.5" height="4.5" viewBox="0 0 5.5 4.5"><path d="M0.5 0.8 L2.75 3.6 L5 0.8" fill="none" stroke="#dddddd" stroke-width="1.1"/></svg>
<div class="a" style="left:810px;top:419px;width:214px;height:1.3px;background:#1a1a1a;border-radius:0px;"></div>
<div class="a" style="left:810px;top:420.3px;width:214px;height:85.4px;background:#363636;border-radius:0px;"></div>
<svg style="left:822px;top:438px" width="28" height="28" viewBox="0 0 28 28"><path d="M2 2 Q14 3.6 26 2 Q24.4 14 26 26 Q14 24.4 2 26 Q3.6 14 2 2Z" fill="#696969"/><g fill="#696969"><circle cx="2.4" cy="2.4" r="2"/><circle cx="25.6" cy="2.4" r="2"/><circle cx="2.4" cy="25.6" r="2"/><circle cx="25.6" cy="25.6" r="2"/><circle cx="14" cy="3" r="1.8"/><circle cx="14" cy="25" r="1.8"/><circle cx="3" cy="14" r="1.8"/><circle cx="25" cy="14" r="1.8"/></g><circle cx="14" cy="14" r="1.7" fill="#555"/></svg>
<div class="a" style="left:876.2px;top:431.4px;width:41.1px;height:11.3px;background:#2d2d2d;border-radius:2px;"></div>
<div class="a" style="left:938.6px;top:431.4px;width:41px;height:11.3px;background:#2d2d2d;border-radius:2px;"></div>
<div class="a" style="left:876.2px;top:446.2px;width:41.1px;height:12.1px;background:#2d2d2d;border-radius:2px;"></div>
<div class="a" style="left:938.6px;top:446.2px;width:41px;height:12.1px;background:#2d2d2d;border-radius:2px;"></div>
<div class="a" style="left:876.2px;top:466px;width:41.1px;height:12px;background:#2d2d2d;border-radius:2px;"></div>
<div class="a" style="left:938.6px;top:466px;width:41px;height:12px;background:#2d2d2d;border-radius:2px;"></div>
<svg style="left:912.6px;top:470.4px" width="3.6" height="3" viewBox="0 0 3.6 3"><path d="M0 0 H3.6 L1.8 2.6Z" fill="#777"/></svg>
<svg style="left:975.5px;top:470.4px" width="3.6" height="3" viewBox="0 0 3.6 3"><path d="M0 0 H3.6 L1.8 2.6Z" fill="#777"/></svg>
<svg style="left:985.8px;top:437px" width="6" height="15" viewBox="0 0 6 15"><path d="M1 6.4 V2.6 Q1 0.6 3 0.6 Q5 0.6 5 2.6 V6.4 M1 8.6 V12.4 Q1 14.4 3 14.4 Q5 14.4 5 12.4 V8.6 M3 4.6 V10.4" fill="none" stroke="#a0a0a0" stroke-width="1"/></svg>
<svg style="left:957.7px;top:483.8px" width="10.6" height="10" viewBox="0 0 10.6 10"><path d="M4 0.6 H10 V9.4" fill="none" stroke="#cfcfcf" stroke-width="1"/><rect x="0.2" y="4" width="6.2" height="6" rx="1" fill="#eeeeee"/></svg>
<svg style="left:976.2px;top:488px" width="4.4" height="3.6" viewBox="0 0 4.4 3.6"><path d="M0 0 H4.4 L2.2 3.2Z" fill="#dddddd"/></svg>
<div class="t" style="left:102.80px;top:16.00px;font-size:9.0px;color:#14232b;font-weight:bold;transform:scaleX(0.933)">ベクター</div>
<div class="t" style="left:171.09px;top:16.00px;font-size:8.55px;color:#c4c4c4;transform:scaleX(0.914)">ピクセル</div>
<div class="t" style="left:239.54px;top:16.00px;font-size:8.55px;color:#c4c4c4;transform:scaleX(0.964)">レイアウト</div>
<div class="t" style="left:316.60px;top:16.00px;font-size:10px;color:#c4c4c4;transform:scaleX(0.952)">Canva AI</div>
<div class="t" style="left:894.40px;top:16.10px;font-size:8.55px;color:#e0e0e0;font-weight:bold;transform:scaleX(0.824)">PNG をエクスポート</div>
<div class="t" style="left:1009.52px;top:15.70px;font-size:10.5px;color:#f0f0f0;font-weight:bold;transform:scaleX(1.080)">?</div>
<div class="t" style="left:1.65px;top:51.20px;font-size:7.48px;color:#cfcfcf;font-weight:bold;transform:scaleX(1.049)">コンテキスト:</div>
<div class="t" style="left:57.50px;top:51.30px;font-size:7.48px;color:#e4e4e4;font-weight:bold;transform:scaleX(1.009)">塗りつぶし</div>
<div class="t" style="left:122.00px;top:51.70px;font-size:7.48px;color:#cfcfcf;font-weight:bold;transform:scaleX(1.065)">タイプ:</div>
<div class="t" style="left:154.70px;top:51.30px;font-size:7.48px;color:#e4e4e4;font-weight:bold;transform:scaleX(1.000)">実線</div>
<div class="t" style="left:280.00px;top:51.30px;font-size:7.48px;color:#dcdcdc;font-weight:bold;transform:scaleX(1.156)">着色ブレンド</div>
<div class="t" style="left:827.40px;top:74.20px;font-size:7.48px;color:#e6e6e6;font-weight:bold;transform:scaleX(0.990)">カラー</div>
<div class="t" style="left:857.60px;top:74.20px;font-size:7.48px;color:#bdbdbd;font-weight:bold;transform:scaleX(1.020)">スウォッチ</div>
<div class="t" style="left:902.70px;top:74.70px;font-size:7.48px;color:#bdbdbd;font-weight:bold;transform:scaleX(1.052)">境界線</div>
<div class="t" style="left:933.30px;top:74.70px;font-size:7.48px;color:#bdbdbd;font-weight:bold;transform:scaleX(1.056)">アピアランス</div>
<div class="t" style="left:815.30px;top:182.90px;font-size:8px;color:#dedede;font-weight:bold;transform:scaleX(0.904)">H: 178</div>
<div class="t" style="left:815.50px;top:192.10px;font-size:8px;color:#dedede;font-weight:bold;transform:scaleX(0.921)">S: 52</div>
<div class="t" style="left:815.80px;top:201.00px;font-size:8px;color:#dedede;font-weight:bold;transform:scaleX(0.958)">L: 50</div>
<div class="t" style="left:815.50px;top:214.30px;font-size:7.04px;color:#d6d6d6;font-weight:bold;transform:scaleX(1.036)">不透明度</div>
<div class="t" style="left:985.50px;top:206.20px;font-size:8px;color:#aaaaaa;font-weight:bold;transform:scaleX(0.929)">#:</div>
<div class="t" style="left:996.60px;top:205.70px;font-size:8.5px;color:#e0e0e0;font-weight:bold;transform:scaleX(0.982)">3DC0BB</div>
<div class="t" style="left:987.20px;top:225.50px;font-size:8.5px;color:#e0e0e0;font-weight:bold;transform:scaleX(0.950)">100 %</div>
<div class="t" style="left:818.20px;top:248.00px;font-size:7.04px;color:#d6d6d6;font-weight:bold;transform:scaleX(0.990)">色合い</div>
<div class="t" style="left:818.20px;top:273.20px;font-size:7.04px;color:#d6d6d6;font-weight:bold;transform:scaleX(1.021)">色調</div>
<div class="t" style="left:818.00px;top:298.10px;font-size:7.04px;color:#d6d6d6;font-weight:bold;transform:scaleX(1.007)">分裂補色</div>
<div class="t" style="left:818.00px;top:323.30px;font-size:7.04px;color:#d6d6d6;font-weight:bold;transform:scaleX(1.014)">類似色</div>
<div class="t" style="left:818.00px;top:348.50px;font-size:7.04px;color:#d6d6d6;font-weight:bold;transform:scaleX(1.019)">3 色配色</div>
<div class="t" style="left:944.40px;top:248.00px;font-size:7.04px;color:#d6d6d6;font-weight:bold;transform:scaleX(1.000)">陰影</div>
<div class="t" style="left:944.40px;top:273.20px;font-size:7.04px;color:#d6d6d6;font-weight:bold;transform:scaleX(1.000)">補色</div>
<div class="t" style="left:944.40px;top:298.10px;font-size:7.04px;color:#d6d6d6;font-weight:bold;transform:scaleX(1.262)">正方形</div>
<div class="t" style="left:944.40px;top:323.30px;font-size:7.04px;color:#d6d6d6;font-weight:bold;transform:scaleX(1.020)">アクセント色と類似色</div>
<div class="t" style="left:944.40px;top:348.50px;font-size:7.04px;color:#d6d6d6;font-weight:bold;transform:scaleX(1.004)">4 色配色</div>
<div class="t" style="left:826.36px;top:384.70px;font-size:7.48px;color:#e6e6e6;font-weight:bold;transform:scaleX(1.041)">レイヤー</div>
<div class="t" style="left:868.00px;top:385.20px;font-size:7.48px;color:#bdbdbd;font-weight:bold;transform:scaleX(1.029)">パスブラシ</div>
<div class="t" style="left:919.80px;top:384.70px;font-size:7.48px;color:#bdbdbd;font-weight:bold;transform:scaleX(1.056)">エフェクト</div>
<div class="t" style="left:973.60px;top:384.70px;font-size:7.48px;color:#bdbdbd;font-weight:bold;transform:scaleX(1.014)">スタイル</div>
<div class="t" style="left:827.00px;top:406.00px;font-size:7.48px;color:#e6e6e6;font-weight:bold;transform:scaleX(1.021)">変形</div>
<div class="t" style="left:850.20px;top:406.00px;font-size:7.48px;color:#bdbdbd;font-weight:bold;transform:scaleX(1.053)">ナビゲータ</div>
<div class="t" style="left:895.50px;top:406.00px;font-size:7.48px;color:#bdbdbd;font-weight:bold;transform:scaleX(1.014)">履歴</div>
<div class="t" style="left:918.80px;top:406.00px;font-size:7.48px;color:#bdbdbd;font-weight:bold;transform:scaleX(1.031)">タイポグラフィ</div>
<div class="t" style="left:865.60px;top:434.30px;font-size:8px;color:#e0e0e0;font-weight:bold;transform:scaleX(0.975)">X:</div>
<div class="t" style="left:878.40px;top:433.70px;font-size:8px;color:#6e6e6e;transform:scaleX(1.040)">0 mm</div>
<div class="t" style="left:926.50px;top:434.00px;font-size:8px;color:#e0e0e0;font-weight:bold;transform:scaleX(0.950)">W:</div>
<div class="t" style="left:941.00px;top:433.70px;font-size:8px;color:#6e6e6e;transform:scaleX(1.060)">0 mm</div>
<div class="t" style="left:865.60px;top:449.10px;font-size:8px;color:#e0e0e0;font-weight:bold;transform:scaleX(1.114)">Y:</div>
<div class="t" style="left:878.40px;top:448.90px;font-size:8px;color:#6e6e6e;transform:scaleX(1.040)">0 mm</div>
<div class="t" style="left:928.00px;top:448.90px;font-size:8px;color:#e0e0e0;font-weight:bold;transform:scaleX(1.000)">H:</div>
<div class="t" style="left:941.00px;top:448.90px;font-size:8px;color:#6e6e6e;transform:scaleX(1.060)">0 mm</div>
<div class="t" style="left:865.60px;top:468.20px;font-size:8px;color:#e0e0e0;font-weight:bold;transform:scaleX(0.975)">R:</div>
<div class="t" style="left:878.40px;top:468.40px;font-size:8px;color:#6e6e6e;transform:scaleX(1.060)">0 °</div>
<div class="t" style="left:928.70px;top:468.20px;font-size:8px;color:#e0e0e0;font-weight:bold;transform:scaleX(0.912)">S:</div>
<div class="t" style="left:941.00px;top:468.40px;font-size:8px;color:#6e6e6e;transform:scaleX(1.050)">0 °</div>
</body></html>
